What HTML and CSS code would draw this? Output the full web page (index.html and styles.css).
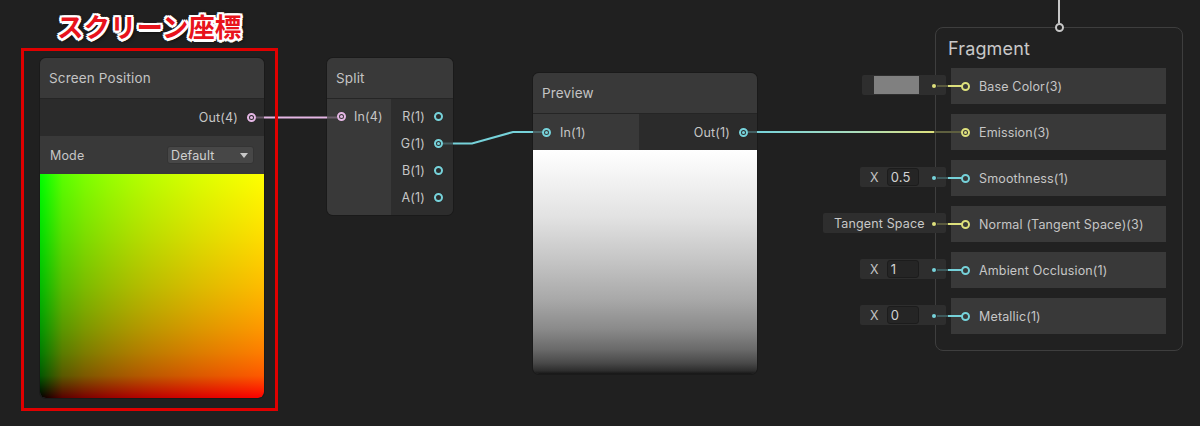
FILE: index.html
```html
<!DOCTYPE html>
<html lang="ja">
<head>
<meta charset="utf-8">
<title>Screen Position</title>
<link rel="stylesheet" href="styles.css">
</head>
<body>
<div class="canvas">
  <div class="title">スクリーン座標</div>
  <div class="frame"></div>

  <div class="node sp">
    <div class="node-title">Screen Position</div>
    <div class="sp-out"><span class="lbl">Out(4)</span><span class="port pink on"></span></div>
    <div class="sp-mode">
      <span class="lbl">Mode</span>
      <div class="dropdown"><span>Default</span><span class="caret"></span></div>
    </div>
    <div class="uv-preview"></div>
  </div>

  <div class="node split">
    <div class="node-title">Split</div>
    <div class="split-body">
      <div class="col in-col">
        <div class="slot"><span class="port pink on"></span><span class="lbl">In(4)</span></div>
      </div>
      <div class="col out-col">
        <div class="slot"><span class="lbl">R(1)</span><span class="port cyan"></span></div>
        <div class="slot"><span class="lbl">G(1)</span><span class="port cyan on"></span></div>
        <div class="slot"><span class="lbl">B(1)</span><span class="port cyan"></span></div>
        <div class="slot"><span class="lbl">A(1)</span><span class="port cyan"></span></div>
      </div>
    </div>
  </div>

  <div class="node preview">
    <div class="node-title">Preview</div>
    <div class="pv-row">
      <div class="pv-in"><span class="port cyan on"></span><span class="lbl">In(1)</span></div>
      <div class="pv-out"><span class="lbl">Out(1)</span><span class="port cyan on"></span></div>
    </div>
    <div class="gray-preview"></div>
  </div>

  <div class="fragment">
    <span class="port top-port"></span>
    <div class="frag-title">Fragment</div>
    <div class="frag-rows">
      <div class="frow">
        <div class="inline-val color-val"><span class="swatch"></span></div>
        <span class="dot yellow-bg"></span><span class="stub dim-yellow"></span><span class="stub-bright yellow-bg"></span>
        <span class="port yellow"></span><span class="lbl">Base Color(3)</span>
      </div>
      <div class="frow">
        <span class="emi-stub"></span>
        <span class="port yellow on"></span><span class="lbl">Emission(3)</span>
      </div>
      <div class="frow">
        <div class="inline-val vec"><span class="x">X</span><span class="field">0.5</span></div>
        <span class="dot cyan-bg"></span><span class="stub dim-cyan"></span><span class="stub-bright cyan-bg"></span>
        <span class="port cyan"></span><span class="lbl">Smoothness(1)</span>
      </div>
      <div class="frow">
        <div class="inline-val space-val">Tangent Space</div>
        <span class="dot yellow-bg"></span><span class="stub dim-yellow"></span><span class="stub-bright yellow-bg"></span>
        <span class="port yellow"></span><span class="lbl">Normal (Tangent Space)(3)</span>
      </div>
      <div class="frow">
        <div class="inline-val vec"><span class="x">X</span><span class="field">1</span></div>
        <span class="dot cyan-bg"></span><span class="stub dim-cyan"></span><span class="stub-bright cyan-bg"></span>
        <span class="port cyan"></span><span class="lbl">Ambient Occlusion(1)</span>
      </div>
      <div class="frow">
        <div class="inline-val vec"><span class="x">X</span><span class="field">0</span></div>
        <span class="dot cyan-bg"></span><span class="stub dim-cyan"></span><span class="stub-bright cyan-bg"></span>
        <span class="port cyan"></span><span class="lbl">Metallic(1)</span>
      </div>
    </div>
  </div>

  <svg class="wires" width="1200" height="426" viewBox="0 0 1200 426">
    <defs>
      <linearGradient id="emi" x1="757" y1="0" x2="934" y2="0" gradientUnits="userSpaceOnUse">
        <stop offset="0" stop-color="#76d2da"/>
        <stop offset="0.55" stop-color="#a9dcbd"/>
        <stop offset="1" stop-color="#dde07c"/>
      </linearGradient>
    </defs>
    <line x1="1059" y1="0" x2="1059" y2="23" stroke="#c8c8c8" stroke-width="2"/>
    <line x1="256" y1="117.5" x2="264" y2="117.5" stroke="#e4b6e4" stroke-opacity=".3" stroke-width="2"/>
    <line x1="264" y1="117.5" x2="327" y2="117.5" stroke="#e4b6e4" stroke-width="2"/>
    <line x1="327" y1="117.5" x2="337" y2="117.5" stroke="#e4b6e4" stroke-opacity=".3" stroke-width="2"/>
    <line x1="443" y1="143.5" x2="453" y2="143.5" stroke="#76d2da" stroke-opacity=".3" stroke-width="2"/>
    <polyline points="453,143.5 472,143.5 513,132 533,132" fill="none" stroke="#76d2da" stroke-width="2"/>
    <line x1="533" y1="132" x2="542" y2="132" stroke="#76d2da" stroke-opacity=".3" stroke-width="2"/>
    <line x1="748" y1="132" x2="757" y2="132" stroke="#76d2da" stroke-opacity=".3" stroke-width="2"/>
    <line x1="757" y1="132" x2="934" y2="132" stroke="url(#emi)" stroke-width="2"/>
  </svg>
</div>
</body>
</html>
```

FILE: styles.css
```css
* { box-sizing: border-box; margin: 0; padding: 0; }
html, body { width: 1200px; height: 426px; overflow: hidden; background: #202020; }
body { font-family: Inter, "Noto Sans", sans-serif; font-size: 12.5px; color: #c4c4c4; letter-spacing: 0.15px; }

.canvas { position: relative; width: 1200px; height: 426px; }

.title {
  position: absolute; left: 57px; top: 11px; z-index: 6;
  font: 700 26.5px/30px "Noto Sans CJK JP", sans-serif; letter-spacing: 0;
  color: #e8131c;
  text-shadow:
    2.5px 0 0 #fff, -2.5px 0 0 #fff, 0 2.5px 0 #fff, 0 -2.5px 0 #fff,
    2px 2px 0 #fff, -2px 2px 0 #fff, 2px -2px 0 #fff, -2px -2px 0 #fff,
    0 0 4px rgba(0,0,0,.9), 2px 2px 4px rgba(0,0,0,.9);
}
.frame {
  position: absolute; left: 21px; top: 48px; width: 257px; height: 363px;
  border: 3px solid #e00000; z-index: 5;
}

/* generic node */
.node {
  position: absolute; background: #2d2d2d; border-radius: 6px; overflow: hidden;
  box-shadow: 0 0 0 1px #1a1a1a;
}
.node-title {
  height: 41px; background: #393939; border-bottom: 1px solid #252525;
  padding-left: 9px; display: flex; align-items: center; font-size: 13.5px; color: #c4c4c4;
}
.lbl { white-space: nowrap; color: #c6c6c6; font-size: 12.5px; }

/* ports */
.port {
  position: relative; flex: none; width: 9px; height: 9px; border-radius: 50%;
  border: 2px solid currentColor;
}
.port.on::after {
  content: ""; position: absolute; left: 1px; top: 1px; width: 3px; height: 3px;
  border-radius: 50%; background: currentColor;
}
.pink { color: #e4b6e4; }
.cyan { color: #76d2da; }
.yellow { color: #dde07c; }
.cyan-bg { background: #76d2da; }
.yellow-bg { background: #dde07c; }

/* screen position */
.sp { left: 40px; top: 58px; width: 224px; }
.sp-out {
  height: 37px; background: #2b2b2b; display: flex; align-items: center;
  justify-content: flex-end; gap: 9px; padding-right: 8px;
}
.sp-mode {
  height: 38px; background: #393939; display: flex; align-items: center;
  justify-content: space-between; padding: 0 10px;
}
.dropdown {
  width: 87px; height: 18px; background: #474747; border-radius: 3px;
  border: 1px solid #343434; display: flex; align-items: center; padding-left: 3px;
  font-size: 12.5px; color: #d0d0d0;
}
.caret {
  margin-left: auto; margin-right: 5px; width: 0; height: 0;
  border-left: 4px solid transparent; border-right: 4px solid transparent;
  border-top: 5px solid #c8c8c8;
}
.uv-preview {
  height: 224px;
  background:
    linear-gradient(to top, rgb(0,0,0) 0%, rgb(0,89,0) 10%, rgb(0,124,0) 20%, rgb(0,149,0) 30%, rgb(0,170,0) 40%, rgb(0,188,0) 50%, rgb(0,203,0) 60%, rgb(0,218,0) 70%, rgb(0,231,0) 80%, rgb(0,243,0) 90%, rgb(0,255,0) 100%),
    linear-gradient(to right, rgb(0,0,0) 0%, rgb(89,0,0) 10%, rgb(124,0,0) 20%, rgb(149,0,0) 30%, rgb(170,0,0) 40%, rgb(188,0,0) 50%, rgb(203,0,0) 60%, rgb(218,0,0) 70%, rgb(231,0,0) 80%, rgb(243,0,0) 90%, rgb(255,0,0) 100%);
  background-blend-mode: screen;
  border-radius: 0 0 6px 6px;
}

/* split */
.split { left: 327px; top: 58px; width: 126px; }
.split-body { display: grid; grid-template-columns: 64px 62px; height: 116px; }
.col { padding-top: 4px; display: flex; flex-direction: column; }
.in-col { background: #393939; padding-left: 10px; }
.out-col { background: #2d2d2d; padding-right: 10px; align-items: flex-end; }
.slot { height: 27px; display: flex; align-items: center; }
.in-col .slot { gap: 8px; }
.out-col .slot { gap: 9px; }

/* preview */
.preview { left: 533px; top: 73px; width: 224px; }
.pv-row { display: grid; grid-template-columns: 106px 118px; height: 36px; }
.pv-in { background: #393939; display: flex; align-items: center; gap: 9px; padding-left: 9px; }
.pv-out { background: #2b2b2b; display: flex; align-items: center; justify-content: flex-end; gap: 9px; padding-right: 9px; }
.gray-preview {
  height: 224px; border-radius: 0 0 6px 6px;
  background: linear-gradient(to bottom, #ffffff 0%, #e2e2e2 30%, #c4c4c4 50%, #a8a8a8 67%, #8a8a8a 80%, #6a6a6a 89%, #4a4a4a 95%, #2e2e2e 98.5%, #161616 100%);
}

/* fragment */
.fragment {
  position: absolute; left: 935px; top: 27px; width: 248px;
  border: 1px solid #3e3e3e; border-radius: 8px; background: #212121;
  padding: 0 16px 16px 15px;
}
.top-port {
  position: absolute; left: 119px; top: -5.5px; color: #c8c8c8; background: #212121;
}
.frag-title {
  height: 40px; display: flex; align-items: center; margin-left: -3px;
  font-size: 18px; color: #c8c8c8;
}
.frag-rows { display: flex; flex-direction: column; gap: 10px; }
.frow {
  position: relative; height: 36px; background: #393939;
  display: flex; align-items: center; gap: 9px; padding-left: 10px;
}
.inline-val {
  position: absolute; right: calc(100% + 5px); top: 7px; height: 20px;
  background: #2e2e2e; display: flex; align-items: center; border-radius: 2px;
}
.color-val { width: 84px; padding-left: 12px; }
.swatch { width: 45px; height: 18px; background: #808080; }
.vec { width: 86px; padding-left: 10px; gap: 8px; }
.x { color: #c4c4c4; }
.field {
  width: 32px; height: 18px; background: #252525; border: 1px solid #1c1c1c; border-radius: 3px;
  padding-left: 3px; display: flex; align-items: center; color: #d2d2d2; font-size: 13px;
}
.space-val { width: 123px; padding-left: 11px; color: #c8c8c8; font-size: 12.5px; }
.dot {
  position: absolute; left: -19px; top: 16px; width: 4px; height: 4px; border-radius: 50%; z-index: 2;
}
.stub { position: absolute; left: -14px; top: 17px; width: 11px; height: 2px; z-index: 2; }
.stub-bright { position: absolute; left: -3px; top: 17px; width: 14px; height: 2px; }
.dim-yellow { background: #5a5a3e; }
.dim-cyan { background: #3e5a5c; }
.emi-stub { position: absolute; left: -17px; top: 17px; width: 28px; height: 2px; background: #5e5f3f; }

.wires { position: absolute; left: 0; top: 0; z-index: 3; pointer-events: none; }
```
